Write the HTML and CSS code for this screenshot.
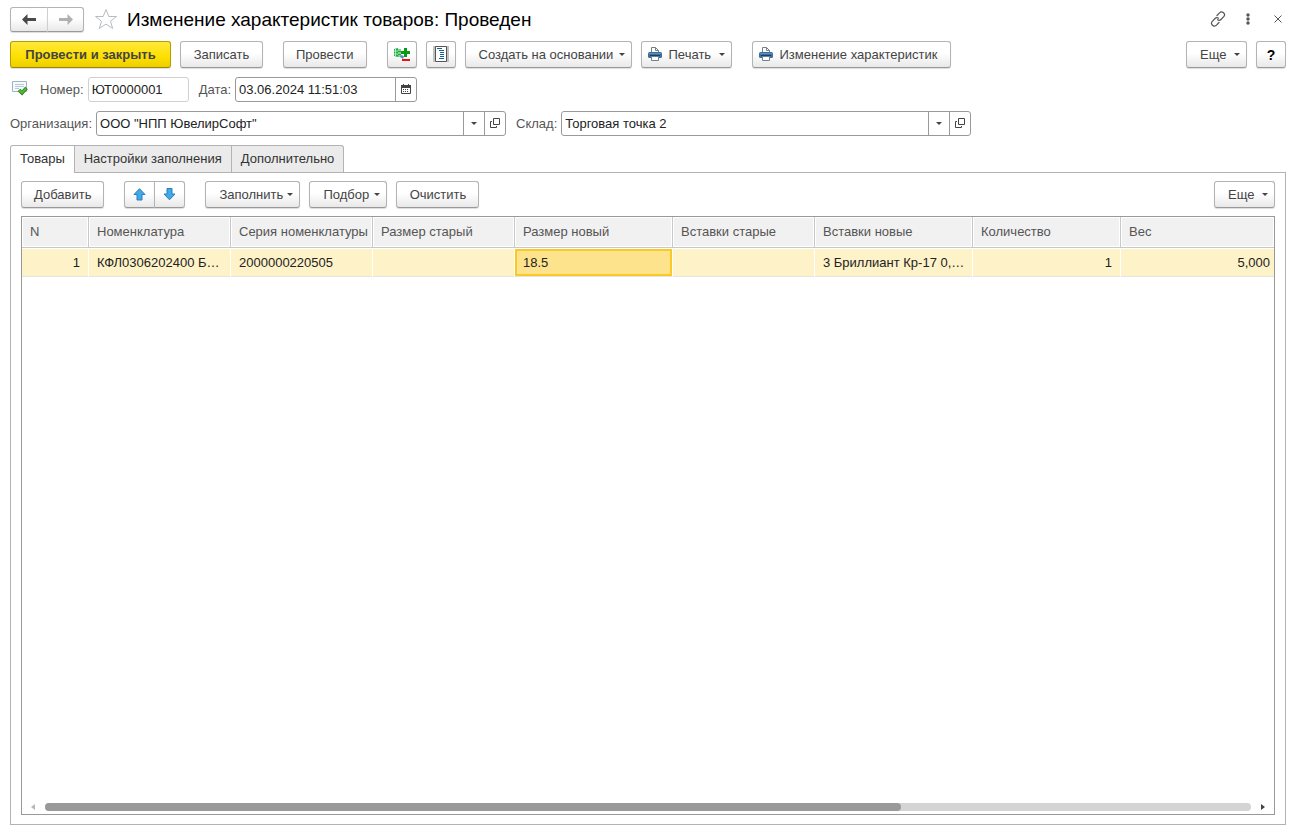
FILE: index.html
```html
<!DOCTYPE html>
<html lang="ru">
<head>
<meta charset="utf-8">
<title>Изменение характеристик товаров: Проведен</title>
<link rel="stylesheet" href="styles.css">
</head>
<body>
<svg class="defs" aria-hidden="true">
  <symbol id="printer" viewBox="0 0 14 15">
    <path d="M3.500 6V.5h4l3 3V6" fill="#fff" stroke="#6d8191"/>
    <path d="M7.500 .5v3h3" fill="none" stroke="#6d8191"/>
    <rect x="0" y="5" width="14" height="6" rx="1.500" fill="#3d6f9e"/>
    <rect x="1" y="6" width="12" height="1" fill="#5f90bb"/>
    <rect x="2" y="8" width="10" height="1" fill="#1d3f63"/>
    <path d="M3.500 9.500h7v4h-7z" fill="#fff" stroke="#6d8191"/>
  </symbol>
  <symbol id="open" viewBox="0 0 10 11">
    <path d="M3.500 .5h6v6h-6z" fill="none" stroke="#444"/>
    <path d="M2 3.500H.5v6h6V8" fill="none" stroke="#444"/>
  </symbol>
</svg>
<main class="page">
  <header class="header">
    <div class="pair nav">
      <button type="button" class="btn" aria-label="Назад"><svg width="14" height="11" viewBox="0 0 14 11"><path d="M0 5.500L5.500 0v4H14v3H5.500v4z" fill="#4a4a4a"/></svg></button>
      <button type="button" class="btn" aria-label="Вперед"><svg width="14" height="11" viewBox="0 0 14 11"><path d="M14 5.500L8.500 0v4H0v3h8.500v4z" fill="#b0b0b0"/></svg></button>
    </div>
    <button type="button" class="plain star" aria-label="В избранное"><svg width="24" height="23" viewBox="0 0 24 23"><path d="M12 1.500l2.800 7h7.700l-6 4.700 2.200 7.300-6.700-4.400-6.700 4.400 2.200-7.300-6-4.700h7.700z" fill="#fff" stroke="#b4bcc4"/></svg></button>
    <h1 class="title">Изменение характеристик товаров: Проведен</h1>
    <div class="window">
      <button type="button" class="plain" aria-label="Ссылка"><svg width="16" height="17" viewBox="0 0 16 17" fill="none" stroke="#555" stroke-width="1.200" stroke-linecap="round"><path d="M7 4.500l2.500-2.600a2.700 2.700 0 0 1 4.200 3.800L11 8.500a2.700 2.700 0 0 1-3.500.3"/><path d="M9 11.500l-2.500 2.600a2.700 2.700 0 0 1-4.200-3.800L5 7.500a2.700 2.700 0 0 1 3.500-.3"/></svg></button>
      <button type="button" class="plain" aria-label="Меню"><svg width="4" height="13" viewBox="0 0 4 13" fill="#555"><circle cx="2" cy="2" r="1.700"/><circle cx="2" cy="6" r="1.700"/><circle cx="2" cy="10" r="1.700"/></svg></button>
      <button type="button" class="plain" aria-label="Закрыть"><svg width="8" height="9" viewBox="0 0 8 9"><path d="M.5 .5l7 7M7.500 .5l-7 7" stroke="#555"/></svg></button>
    </div>
  </header>

  <div class="toolbar">
    <button type="button" class="btn primary">Провести и закрыть</button>
    <button type="button" class="btn">Записать</button>
    <button type="button" class="btn apart">Провести</button>
    <button type="button" class="btn icon apart" aria-label="Движения"><svg width="16" height="15" viewBox="0 0 16 15"><path d="M0 2l4-1v9l-4-1z" fill="#28a845"/><path d="M1.500 1v9M0 4h4M0 7h4" stroke="#a9edb5"/><path d="M4 2h3v8H4z" fill="#7cd58c"/><path d="M4 4.500h3M4 7.500h3" stroke="#28a845"/><path d="M7 8l3 1-1 3-3-2z" fill="#4f90c9"/><path d="M10 1h3v3h3v3h-3v3h-3V7H7V4h3z" fill="#0b9a16"/><path d="M8 12h8v2H8z" fill="#f01010"/></svg></button>
    <button type="button" class="btn icon" aria-label="Журнал"><svg width="16" height="17" viewBox="0 0 16 17"><path d="M0 0h16v16H0z" fill="#c2c2c2"/><path d="M2.500 .5h11v15h-11z" fill="#fff" stroke="#555"/><path d="M4 2.500h5M6 4.500h5M7 6.500h4M7 8.500h4M7 10.500h4M6 12.500h5" stroke="#15628f"/></svg></button>
    <button type="button" class="btn drop create">Создать на основании</button>
    <button type="button" class="btn drop print"><svg width="14" height="15"><use href="#printer"/></svg>Печать</button>
    <button type="button" class="btn report apart"><svg width="14" height="15"><use href="#printer"/></svg>Изменение характеристик</button>
    <button type="button" class="btn drop more">Еще</button>
    <button type="button" class="btn icon help">?</button>
  </div>

  <div class="fields">
    <svg class="status" width="16" height="17" viewBox="0 0 16 17"><path d="M.5 .5h14v10H.5z" fill="#f7fafc" stroke="#9fb3c4"/><path d="M3 3.500h9M3 5.500h9M3 7.500h4" stroke="#b9c8d4"/><path d="M7 9l3 3 4.500-5" fill="none" stroke="#2f7d1c" stroke-width="3.600"/><path d="M7.300 9.200l2.700 2.500 4-4.200" fill="none" stroke="#55bd35" stroke-width="2"/></svg>
    <label for="number">Номер:</label>
    <div class="box readonly"><input id="number" value="ЮТ0000001" readonly></div>
    <label for="date">Дата:</label>
    <div class="box date"><input id="date" value="03.06.2024 11:51:03"><button type="button" aria-label="Календарь"><svg width="10" height="11" viewBox="0 0 10 11"><path d="M.5 1.500h9v8h-9z" fill="#fff" stroke="#444"/><path d="M0 1h10v3H0zM2 0h1v1H2zM7 0h1v1H7z" fill="#444"/><path d="M2 5.500h6M2 7.500h6" stroke="#444" stroke-dasharray="1 1"/></svg></button></div>
  </div>

  <div class="fields">
    <label for="org">Организация:</label>
    <div class="box wide"><input id="org" value="ООО &quot;НПП ЮвелирСофт&quot;"><button type="button" class="arrow" aria-label="Выбрать"></button><button type="button" aria-label="Открыть"><svg width="10" height="11"><use href="#open"/></svg></button></div>
    <label for="store">Склад:</label>
    <div class="box wide"><input id="store" value="Торговая точка 2"><button type="button" class="arrow" aria-label="Выбрать"></button><button type="button" aria-label="Открыть"><svg width="10" height="11"><use href="#open"/></svg></button></div>
  </div>

  <div class="tabs" role="tablist">
    <button type="button" role="tab" class="tab active" aria-selected="true">Товары</button>
    <button type="button" role="tab" class="tab">Настройки заполнения</button>
    <button type="button" role="tab" class="tab">Дополнительно</button>
  </div>

  <section class="panel">
    <div class="toolbar">
      <button type="button" class="btn">Добавить</button>
      <div class="pair apart">
        <button type="button" class="btn" aria-label="Вверх"><svg width="13" height="13" viewBox="0 0 13 13"><path d="M6.500 .7L12 6.500H9v5.500H4V6.500H1z" fill="#3fa9ea" stroke="#2a7fb8"/></svg></button>
        <button type="button" class="btn" aria-label="Вниз"><svg width="13" height="13" viewBox="0 0 13 13"><path d="M6.500 11.800L1 6h3V.5h5V6h3z" fill="#3fa9ea" stroke="#2a7fb8"/></svg></button>
      </div>
      <button type="button" class="btn drop fill apart">Заполнить</button>
      <button type="button" class="btn drop pick">Подбор</button>
      <button type="button" class="btn">Очистить</button>
      <button type="button" class="btn drop more">Еще</button>
    </div>
    <div class="grid">
      <table>
        <colgroup><col class="c-n"><col class="c-m"><col class="c-m"><col class="c-m"><col class="c-l"><col class="c-m"><col class="c-l"><col class="c-q"><col></colgroup>
        <thead><tr><th>N</th><th>Номенклатура</th><th>Серия номенклатуры</th><th>Размер старый</th><th>Размер новый</th><th>Вставки старые</th><th>Вставки новые</th><th>Количество</th><th>Вес</th></tr></thead>
        <tbody><tr><td class="num">1</td><td>КФЛ0306202400 Б…</td><td>2000000220505</td><td></td><td class="current">18.5</td><td></td><td>3 Бриллиант Кр-17 0,…</td><td class="num">1</td><td class="num">5,000</td></tr></tbody>
      </table>
      <div class="scroll">
        <button type="button" class="plain" aria-label="Влево"><svg width="4" height="6" viewBox="0 0 4 6"><path d="M4 0v6L0 3z" fill="#b8b8b8"/></svg></button>
        <div class="track"><div class="thumb"></div></div>
        <button type="button" class="plain" aria-label="Вправо"><svg width="4" height="6" viewBox="0 0 4 6"><path d="M0 0v6l4-3z" fill="#444"/></svg></button>
      </div>
    </div>
  </section>
</main>
</body>
</html>
```
FILE: styles.css
```css
* { box-sizing: border-box; }
body {
  margin: 0;
  background: #fff;
  color: #333;
  font: 13px/16px "Liberation Sans", Arial, sans-serif;
}
button, input { font: inherit; color: inherit; }
button { padding: 0; }
svg { display: block; flex: none; }
.defs { position: absolute; width: 0; height: 0; }

.page {
  display: flex;
  flex-direction: column;
  min-height: 100vh;
  padding: 7px 12px 9px 10px;
}

.header { display: flex; align-items: center; height: 25px; }
.title { margin: 0 0 0 9px; font-size: 19px; line-height: 24px; font-weight: 400; color: #000; white-space: nowrap; }
.plain { display: flex; align-items: center; justify-content: center; border: 0; background: none; }
.star { margin-left: 10px; }
.window { display: flex; align-items: center; gap: 14px; margin-left: auto; }
.window .plain { width: 16px; height: 21px; }

.btn {
  display: flex;
  align-items: center;
  justify-content: center;
  height: 27px;
  min-width: 83px;
  padding: 0 12px;
  border: 1px solid #b3b3b3;
  border-bottom-color: #999;
  border-radius: 3px;
  background: linear-gradient(#fff 45%, #e8e8e8);
  box-shadow: 0 1px 1px #ddd;
  color: #444;
  white-space: nowrap;
}
.primary {
  min-width: 161px;
  border-color: #b59d00;
  border-bottom-color: #9c8700;
  background: linear-gradient(#ffe93c, #fddf00 60%, #eccf00);
  font-weight: 700;
}
.icon { min-width: 30px; padding: 0; }
.help { color: #000; font-weight: 700; font-size: 14px; }
.drop { padding: 0 6px 0 13px; justify-content: flex-start; }
.drop::after, .arrow::after {
  content: "";
  border: 3px solid transparent;
  border-top-color: #444;
  border-bottom: 0;
}
.drop::after { margin-left: auto; }
.create { min-width: 167px; }
.print, .report { padding: 0 6px; gap: 7px; }
.print { min-width: 91px; }
.report { min-width: 199px; justify-content: flex-start; }
.fill { min-width: 95px; }
.pick { min-width: 78px; }
.more { min-width: 61px; margin-left: auto; }
.pair { display: flex; }
.pair .btn { min-width: 31px; padding: 0; }
.pair .btn:first-child { border-radius: 3px 0 0 3px; }
.pair .btn + .btn { margin-left: -1px; border-radius: 0 3px 3px 0; }
.nav .btn { min-width: 38px; height: 25px; }
.nav .btn + .btn { min-width: 37px; border-left-color: #d0d0d0; }

.toolbar { display: flex; gap: 9px; }
.page > .toolbar { margin: 9px 0; }
.toolbar .apart { margin-left: 11px; }

.fields { display: flex; align-items: center; margin-bottom: 9px; color: #555; }
.fields label { margin-right: 4px; }
.status { margin: 0 12px 0 2px; }
.box {
  display: flex;
  height: 25px;
  margin-right: 10px;
  border: 1px solid #999;
  border-radius: 3px;
  background: #fff;
}
.box input { flex: 1; min-width: 0; padding: 0 3px; border: 0; background: none; color: #222; outline: 0; }
.box button {
  display: flex;
  align-items: center;
  justify-content: center;
  width: 21px;
  border: 0;
  border-left: 1px solid #999;
  background: none;
}
.readonly { width: 101px; border-color: #d0d0d0; }
.date { width: 182px; }
.wide { flex: 0 1 410px; }

.tabs { display: flex; }
.tab {
  height: 27px;
  margin-right: -1px;
  padding: 0 9px;
  border: 1px solid #b3b3b3;
  border-bottom: 0;
  background: #ebebeb;
  color: #333;
  white-space: nowrap;
}
.tab:first-child { border-radius: 3px 0 0 0; }
.tab:last-child { border-radius: 0 3px 0 0; }
.tab.active { z-index: 1; height: 28px; margin-bottom: -1px; padding-bottom: 1px; background: #fff; }

.panel {
  display: flex;
  flex: 1;
  flex-direction: column;
  gap: 8px;
  padding: 8px 10px 9px;
  border: 1px solid #b3b3b3;
}
.grid { display: flex; flex: 1; flex-direction: column; border: 1px solid #999; overflow: hidden; }
table { width: 100%; table-layout: fixed; border-collapse: separate; border-spacing: 0; }
.c-n { width: 67px; }
.c-m { width: 142px; }
.c-l { width: 158px; }
.c-q { width: 148px; }
th, td { padding: 0 4px 0 8px; overflow: hidden; white-space: nowrap; text-overflow: ellipsis; text-align: left; }
th {
  height: 31px;
  border-right: 1px solid #c8c8c8;
  border-bottom: 1px solid #c8c8c8;
  background: #f1f1f1;
  box-shadow: inset 1px 1px #fff, inset -1px -1px #fff;
  color: #555;
  font-weight: 400;
}
td {
  height: 29px;
  border-top: 1px solid #fff;
  border-right: 1px solid #fff;
  border-bottom: 1px solid #e4e4e4;
  background: #fef2c8;
  color: #222;
}
.num { padding-right: 8px; text-align: right; }
th:last-child, td:last-child { border-right: 0; padding-right: 4px; }
.current { background: #fee38d; box-shadow: inset 0 0 0 2px #fbc926; }

.scroll { display: flex; align-items: center; gap: 10px; margin-top: auto; padding: 0 9px 3px; }
.track { flex: 1; height: 8px; border-radius: 4px; background: #d4d4d4; }
.thumb { width: 71%; height: 8px; border-radius: 4px; background: #999; }
```
